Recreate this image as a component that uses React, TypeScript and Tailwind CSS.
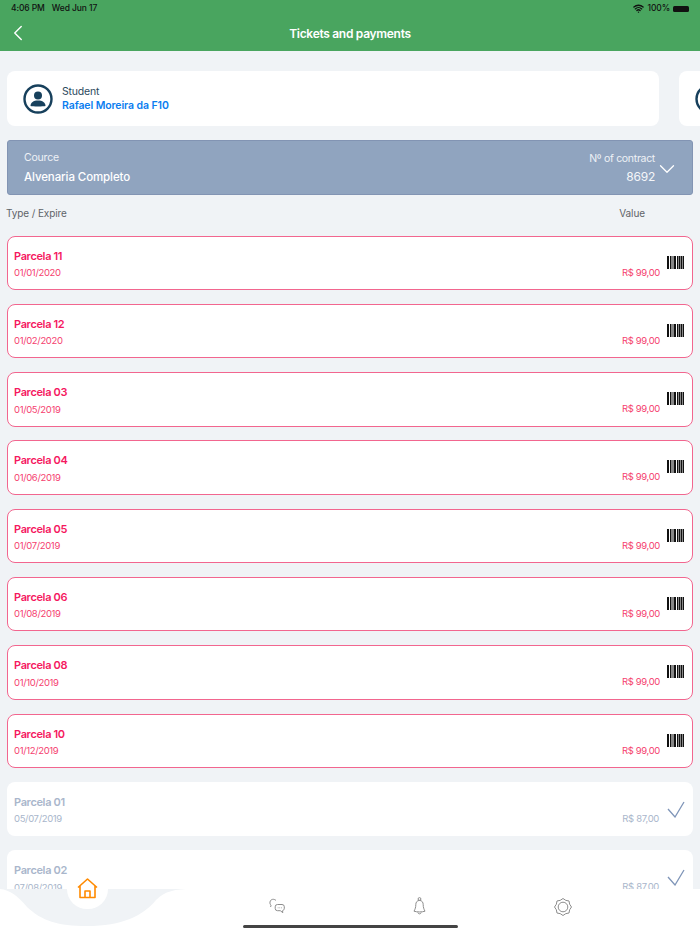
import { ChevronDown, ChevronLeft, Wifi } from 'lucide-react';

const unpaid = [
  { name: 'Parcela 11', date: '01/01/2020' },
  { name: 'Parcela 12', date: '01/02/2020' },
  { name: 'Parcela 03', date: '01/05/2019' },
  { name: 'Parcela 04', date: '01/06/2019' },
  { name: 'Parcela 05', date: '01/07/2019' },
  { name: 'Parcela 06', date: '01/08/2019' },
  { name: 'Parcela 08', date: '01/10/2019' },
  { name: 'Parcela 10', date: '01/12/2019' },
];

const paid = [
  { name: 'Parcela 01', date: '05/07/2019' },
  { name: 'Parcela 02', date: '07/08/2019' },
];

// [x, width] of each bar
const bars = [[0, 2], [3, 1.500], [5.500, 1], [7, 2], [10, 1.500], [12, 1], [13.500, 1.500], [15.500, 1.500]];

// outline of the settings cog, 8 teeth around the center
const gearPoints = Array.from({ length: 16 }, (_, i) => {
  const r = i % 2 === 0 ? 8.500 : 7.200;
  const a = (i * Math.PI) / 8;
  return `${(9 + r * Math.sin(a)).toFixed(2)},${(9 - r * Math.cos(a)).toFixed(2)}`;
}).join(' ');

function Barcode() {
  return (
    <svg width="18" height="13" viewBox="0 0 18 13" fill="#111">
      {bars.map(([x, w]) => (
        <rect key={x} x={x} y="0" width={w} height="13" />
      ))}
    </svg>
  );
}

function UserIcon() {
  return (
    <svg width="30" height="30" viewBox="0 0 30 30" fill="none">
      <circle cx="15" cy="15" r="13.5" stroke="#17405c" strokeWidth="2.4" />
      <circle cx="15" cy="11.5" r="4" fill="#17405c" />
      <path d="M7.5 22c0-3.6 3-5.6 7.500-5.600s7.500 2 7.500 5.600c-2 .6-13 .6-15 0z" fill="#17405c" />
    </svg>
  );
}

function TicketRow({ name, date }: { name: string; date: string }) {
  return (
    <div className="flex h-[54.5px] shrink-0 items-stretch justify-between rounded-[8px] border border-[#f2668f] bg-white pr-[7px] pl-[6px]">
      <div className="pt-[12px]">
        <p className="text-[11px] leading-[14px] font-semibold tracking-[-0.35px] text-[#f5195f]">{name}</p>
        <p className="mt-[3.500px] text-[9.500px] leading-[14px] tracking-[-0.35px] text-[#f5416f]">{date}</p>
      </div>
      <div className="flex items-start">
        <span className="mt-[29px] text-[9.500px] leading-[14px] tracking-[-0.35px] text-[#f5416f]">R$ 99,00</span>
        <div className="mt-[19px] ml-[7px]">
          <Barcode />
        </div>
      </div>
    </div>
  );
}

function PaidRow({ name, date }: { name: string; date: string }) {
  return (
    <div className="flex h-[54.5px] shrink-0 items-stretch justify-between rounded-[8px] bg-white pr-[8px] pl-[7px]">
      <div className="pt-[13px]">
        <p className="text-[11px] leading-[14px] font-semibold tracking-[-0.35px] text-[#a9b6cb]">{name}</p>
        <p className="mt-[3.500px] text-[9.500px] leading-[14px] tracking-[-0.35px] text-[#a9b6cb]">{date}</p>
      </div>
      <div className="flex items-start">
        <span className="mt-[30px] text-[9.500px] leading-[14px] tracking-[-0.35px] text-[#a9b6cb]">R$ 87,00</span>
        <svg className="mt-[19px] ml-[8px]" width="18" height="17" viewBox="0 0 18 17" fill="none" stroke="#7f95b8" strokeWidth="1.300">
          <path d="M1 8l7 8L17 1" />
        </svg>
      </div>
    </div>
  );
}

function TabBar() {
  return (
    <div className="absolute bottom-0 left-0 h-[45px] w-full bg-white">
      {/* curved notch behind the active tab */}
      <svg className="absolute top-0 left-0" width="195" height="45" viewBox="0 0 195 45">
        <path d="M0 0H192C175 0 165 2 156 11C143 27 122 37 87 37C58 37 42 32 27 18C18 7 10 1 0 0Z" fill="#f0f3f6" />
      </svg>
      <div className="absolute top-[-20px] left-[67px] h-[40px] w-[41px] rounded-full bg-white" />
      <svg className="absolute top-[-11px] left-[77px]" width="21" height="21" viewBox="0 0 21 21" fill="none" stroke="#ff8a00" strokeWidth="1.600" strokeLinejoin="round">
        <path d="M1 9.500 10.500 1 20 9.500M3 8v11.500h15V8" />
        <path d="M8 19.500v-6.500h5v6.500" />
      </svg>
      <svg className="absolute top-[9px] left-[269px]" width="16" height="16" viewBox="0 0 16 16" fill="none" stroke="#8d8d8d" strokeWidth="1">
        <path d="M7 2.500C5 .5 1.500 1 1 4c-.3 1.500.3 2.500 1 3.200L1.600 9" />
        <path d="M8.500 6.500h4.500a2.300 2.300 0 0 1 2.300 2.300v1.400c0 1.300-.8 2.300-1.800 2.500l.3 2-2.500-2H8.500a2.300 2.300 0 0 1-2.300-2.300V8.800a2.300 2.300 0 0 1 2.300-2.300z" />
        <path d="M8.800 9.800h.6M10.500 9.800h.6M12.200 9.800h.6" />
      </svg>
      <svg className="absolute top-[8px] left-[413px]" width="13" height="19" viewBox="0 0 13 19" fill="none" stroke="#8d8d8d" strokeWidth="1">
        <circle cx="6.500" cy="2" r="1.400" />
        <path d="M6.500 3.400c-2.500 0-3.700 2-3.700 4.300 0 2.500-.7 4.600-1.800 6.500 3 1 8 1 11 0-1.100-1.900-1.800-4-1.800-6.500 0-2.300-1.200-4.300-3.700-4.300z" />
        <path d="M4.800 15.500c.3 1.800 3.100 1.800 3.400 0" />
      </svg>
      <svg className="absolute top-[9px] left-[554px]" width="18" height="18" viewBox="0 0 18 18" fill="none" stroke="#8d8d8d" strokeWidth="1" strokeLinejoin="round">
        <polygon points={gearPoints} />
        <circle cx="9" cy="9" r="4.800" />
      </svg>
      <div className="absolute top-[36px] left-[243px] h-[3px] w-[215px] rounded-full bg-[#444] blur-[0.5px]" />
    </div>
  );
}

export default function App() {
  return (
    <div className="relative h-[934px] w-[700px] overflow-hidden bg-[#f0f3f6] font-['Inter',sans-serif]">
      <header className="h-[51px] bg-[#49a55f]">
        <div className="flex h-[17px] items-center justify-between pr-[11px] pl-[11px] text-[8.500px] font-medium tracking-[-0.1px] text-[#111]">
          <div className="flex gap-[7px]">
            <span>4:06 PM</span>
            <span>Wed Jun 17</span>
          </div>
          <div className="flex items-center gap-[2px]">
            <Wifi size={11} strokeWidth={3} />
            <span className="ml-[1px]">100%</span>
            <div className="ml-[1px] h-[6px] w-[16px] rounded-[1.500px] bg-[#111]" />
          </div>
        </div>
        <div className="relative flex h-[34px] items-center justify-center">
          <ChevronLeft className="absolute top-[3px] left-[5px] text-white" size={26} strokeWidth={1.300} />
          <h1 className="text-[12px] font-semibold tracking-[-0.3px] text-white">Tickets and payments</h1>
        </div>
      </header>

      <div className="mt-[20px] flex gap-[20px] pl-[7px]">
        <div className="flex h-[55px] w-[652px] shrink-0 items-center gap-[9px] rounded-[8px] bg-white pl-[16px]">
          <UserIcon />
          <div className="pt-[1px]">
            <p className="text-[10.500px] leading-[14px] tracking-[-0.2px] text-[#2c4a5e]">Student</p>
            <p className="text-[10.500px] leading-[14px] font-semibold tracking-[-0.1px] text-[#0a7df0]">Rafael Moreira da F10</p>
          </div>
        </div>
        <div className="flex h-[55px] w-[60px] shrink-0 items-center rounded-[8px] bg-white pl-[16px]">
          <UserIcon />
        </div>
      </div>

      <div className="mx-[7px] mt-[14px] flex h-[55px] items-center justify-between rounded-[3px] border border-[#8294b3] bg-[#90a4bf] pr-[12px] pl-[16px] text-white">
        <div>
          <p className="text-[10.500px] leading-[14px] tracking-[-0.2px] text-[#eef1f6]">Cource</p>
          <p className="mt-[5px] text-[11.500px] leading-[14px] font-medium tracking-[-0.1px]">Alvenaria Completo</p>
        </div>
        <div className="flex items-center">
          <div className="mr-[-1px] text-right">
            <p className="text-[10.500px] leading-[14px] tracking-[-0.3px] text-[#eef1f6]">Nº of contract</p>
            <p className="mt-[4px] text-[12px] leading-[14px] tracking-[-0.2px] text-[#f4f6f9]">8692</p>
          </div>
          <ChevronDown className="mt-[2px]" size={26} strokeWidth={1.200} />
        </div>
      </div>

      <div className="mt-[11px] flex justify-between pr-[55px] pl-[6px] text-[10px] leading-[14px] tracking-[-0.1px] text-[#5f6368]">
        <span>Type / Expire</span>
        <span>Value</span>
      </div>

      <div className="mt-[15.500px] flex flex-col gap-[13.800px] px-[7px]">
        {unpaid.map((t) => (
          <TicketRow key={t.name} name={t.name} date={t.date} />
        ))}
        {paid.map((t) => (
          <PaidRow key={t.name} name={t.name} date={t.date} />
        ))}
      </div>

      <TabBar />
    </div>
  );
}
